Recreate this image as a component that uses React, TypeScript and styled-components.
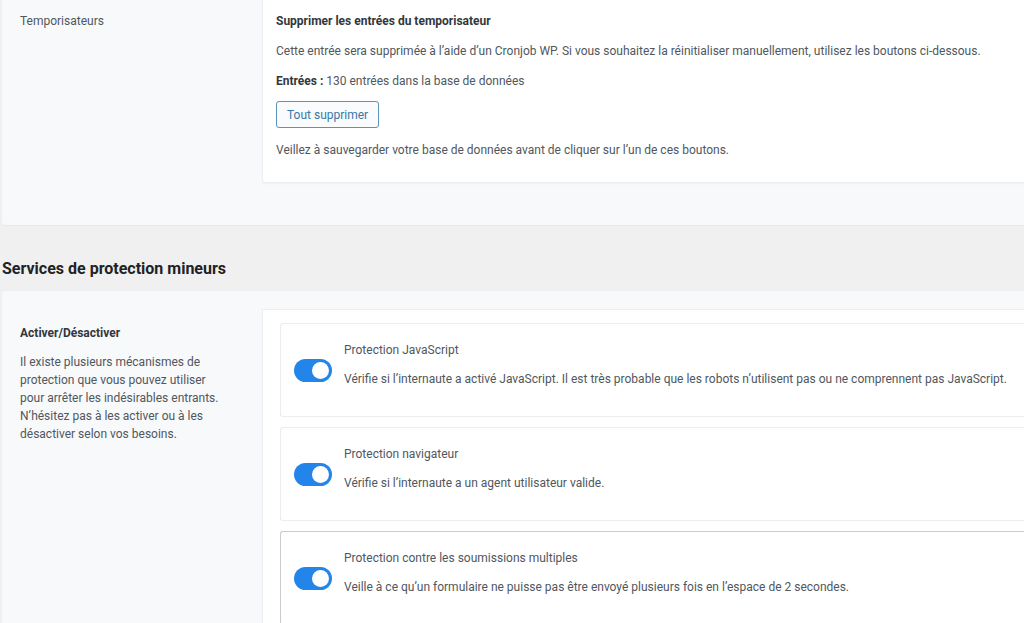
import React from "react";
import styled, { createGlobalStyle } from "styled-components";

const GlobalStyle = createGlobalStyle`
  html, body {
    margin: 0;
    padding: 0;
    background: #f0f0f1;
    overflow: hidden;
  }
  body {
    font-family: Roboto, "Noto Sans", Arial, sans-serif;
    font-size: 12px;
    color: #50575e;
    -webkit-font-smoothing: antialiased;
  }
  * { box-sizing: border-box; }
`;

const Page = styled.div`
  width: 1060px;
  padding-left: 2px;
  display: flex;
  flex-direction: column;
`;

const Card = styled.section<{ $bottom: number }>`
  display: grid;
  grid-template-columns: 260px 1fr;
  background: #f8f9fa;
  border-radius: 0 0 4px 4px;
  padding-bottom: ${(p) => p.$bottom}px;
  box-shadow: 0 1px 1px rgba(0, 0, 0, 0.03);
`;

const Card2 = styled(Card)`
  border-radius: 4px 4px 0 0;
  padding-top: 18px;
`;

const Side = styled.div<{ $top: number }>`
  padding: ${(p) => p.$top}px 36px 0 18px;
  line-height: 18px;
`;

const SideLabel = styled.div<{ $bold?: boolean }>`
  font-weight: ${(p) => (p.$bold ? 700 : 400)};
  color: ${(p) => (p.$bold ? "#32373c" : "#50575e")};
`;

const SideText = styled.p`
  margin: 11px 0 0;
  line-height: 18px;
  color: #50575e;
`;

const Panel = styled.div<{ $pad: string }>`
  background: #ffffff;
  border: 1px solid #eceef1;
  border-right: none;
  box-shadow: 0 1px 2px rgba(0, 0, 0, 0.04);
  padding: ${(p) => p.$pad};
  display: flex;
  flex-direction: column;
`;

const TopPanel = styled(Panel)`
  border-top: none;
  border-radius: 0 0 0 3px;
`;

const Line = styled.p<{ $bold?: boolean; $gap?: number }>`
  margin: 0 0 ${(p) => p.$gap ?? 12}px;
  line-height: 18px;
  font-weight: ${(p) => (p.$bold ? 700 : 400)};
  color: ${(p) => (p.$bold ? "#32373c" : "#50575e")};
  white-space: nowrap;
  b { font-weight: 700; color: #32373c; }
`;

const Button = styled.button`
  align-self: flex-start;
  height: 27px;
  padding: 0 10px;
  margin-bottom: 13px;
  font-family: inherit;
  font-size: 12px;
  color: #3a78a8;
  background: #f9fbfc;
  border: 1px solid #5a93ba;
  border-radius: 3px;
  cursor: pointer;
`;

const Heading = styled.h2`
  margin: 34px 0 12px;
  font-size: 16px;
  line-height: 20px;
  font-weight: 700;
  color: #1d2327;
`;

const Rows = styled.div`
  display: flex;
  flex-direction: column;
  gap: 10px;
`;

const Row = styled.div<{ $active?: boolean }>`
  display: flex;
  align-items: center;
  gap: 12px;
  padding-left: 13px;
  background: #ffffff;
  border: 1px solid ${(p) => (p.$active ? "#c9cbce" : "#eaecef")};
  border-right: none;
  border-radius: 3px 0 0 3px;
`;

const Toggle = styled.span`
  position: relative;
  flex: none;
  width: 38px;
  height: 23px;
  border-radius: 12px;
  background: #2385ea;
  &::after {
    content: "";
    position: absolute;
    top: 3px;
    right: 3px;
    width: 17px;
    height: 17px;
    border-radius: 50%;
    background: #ffffff;
  }
`;

const RowText = styled.div`
  padding: 17px 0 28px;
  line-height: 18px;
`;

const RowTitle = styled.div`
  color: #50575e;
`;

const RowDesc = styled.div`
  margin-top: 11px;
  color: #50575e;
  white-space: nowrap;
`;

const protections = [
  {
    title: "Protection JavaScript",
    desc: "Vérifie si l’internaute a activé JavaScript. Il est très probable que les robots n’utilisent pas ou ne comprennent pas JavaScript.",
  },
  {
    title: "Protection navigateur",
    desc: "Vérifie si l’internaute a un agent utilisateur valide.",
  },
  {
    title: "Protection contre les soumissions multiples",
    desc: "Veille à ce qu’un formulaire ne puisse pas être envoyé plusieurs fois en l’espace de 2 secondes.",
    active: true,
  },
];

export default function App() {
  return (
    <>
      <GlobalStyle />
      <Page>
        <Card $bottom={42}>
          <Side $top={12}>
            <SideLabel>Temporisateurs</SideLabel>
          </Side>
          <TopPanel $pad="12px 14px 11px 13px">
            <Line $bold>Supprimer les entrées du temporisateur</Line>
            <Line>
              Cette entrée sera supprimée à l’aide d’un Cronjob WP. Si vous souhaitez la réinitialiser manuellement, utilisez les boutons ci-dessous.
            </Line>
            <Line $gap={11}>
              <b>Entrées :</b> 130 entrées dans la base de données
            </Line>
            <Button type="button">Tout supprimer</Button>
            <Line>Veillez à sauvegarder votre base de données avant de cliquer sur l’un de ces boutons.</Line>
          </TopPanel>
        </Card>

        <Heading>Services de protection mineurs</Heading>

        <Card2 $bottom={0}>
          <Side $top={15}>
            <SideLabel $bold>Activer/Désactiver</SideLabel>
            <SideText>
              Il existe plusieurs mécanismes de protection que vous pouvez utiliser pour arrêter les indésirables entrants. N’hésitez pas à les activer ou à les désactiver selon vos besoins.
            </SideText>
          </Side>
          <Panel $pad="13px 0 20px 17px">
            <Rows>
              {protections.map((p) => (
                <Row key={p.title} $active={p.active}>
                  <Toggle role="switch" aria-checked="true" />
                  <RowText>
                    <RowTitle>{p.title}</RowTitle>
                    <RowDesc>{p.desc}</RowDesc>
                  </RowText>
                </Row>
              ))}
            </Rows>
          </Panel>
        </Card2>
      </Page>
    </>
  );
}
